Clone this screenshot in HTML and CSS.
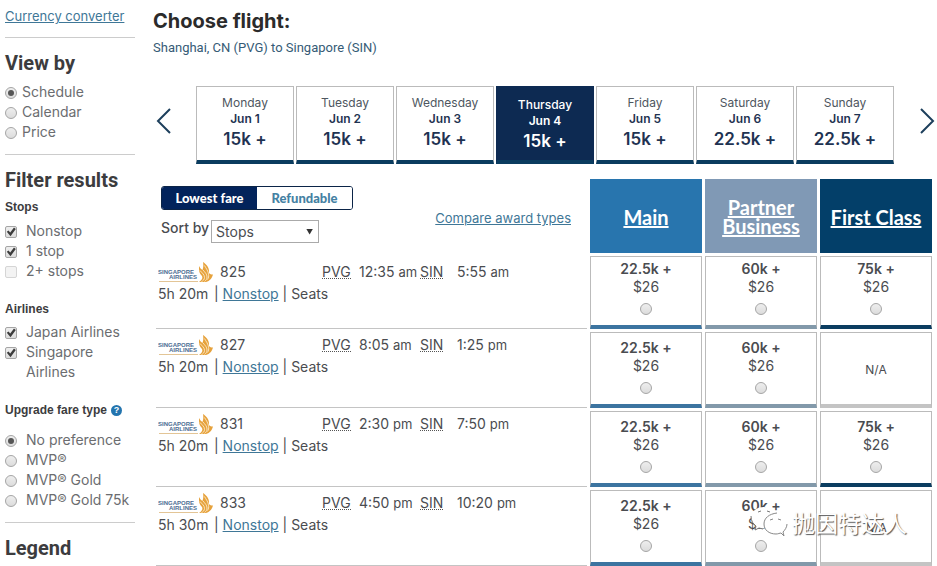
FILE: index.html
```html
<!DOCTYPE html>
<html lang="en">
<head>
<meta charset="utf-8">
<title>Choose flight</title>
<link rel="stylesheet" href="styles.css">
</head>
<body>
<svg class="defs" aria-hidden="true">
  <symbol id="sia" viewBox="0 0 55 21">
    <g class="logo-text" fill="#4c6d92">
      <text x="0" y="12">SINGAPORE</text>
      <text x="39" y="17" text-anchor="end">AIRLINES</text>
    </g>
    <path d="M1 19.500H40" stroke="#e3c596" stroke-width="1"/>
    <path d="M45 0C48 2 51 5 51 9L51 11C52 12 53 12.500 55 12.500C54 16 52 19 48 20L41 20C44 18 45 16 44 14C42 12 41 10 41 7V4C42 6 43 7 44.500 8C45.500 5 45.500 3 45 0Z" fill="#e6a23c"/>
    <path d="M42 8.500C44 11 46.500 12.500 46.500 15.500C46.500 17.500 45 19 43.500 19.500M45 8C47 10.500 49 12 49 15C49 17 48 18.500 46.500 19.500M46.500 3.500C48 6.500 50.500 9 50.500 12.500C51 14 50.500 16 49.500 17.500" stroke="#fff3dc" stroke-width=".8" fill="none"/>
  </symbol>
</svg>
<div class="page">
  <aside class="sidebar">
    <a class="link top-link" href="#">Currency converter</a>
    <section class="group">
      <h2>View by</h2>
      <div class="options tight">
        <label><input type="radio" name="view" checked>Schedule</label>
        <label><input type="radio" name="view">Calendar</label>
        <label><input type="radio" name="view">Price</label>
      </div>
    </section>
    <section class="group">
      <h2>Filter results</h2>
      <h3>Stops</h3>
      <div class="options">
        <label><input type="checkbox" checked>Nonstop</label>
        <label><input type="checkbox" checked>1 stop</label>
        <label class="faded"><input type="checkbox">2+ stops</label>
      </div>
      <h3 class="next">Airlines</h3>
      <div class="options">
        <label><input type="checkbox" checked>Japan Airlines</label>
        <label><input type="checkbox" checked>Singapore Airlines</label>
      </div>
      <h3 class="next">Upgrade fare type <button class="help" type="button" aria-label="Help">?</button></h3>
      <div class="options upgrade">
        <label><input type="radio" name="upgrade" checked>No preference</label>
        <label><input type="radio" name="upgrade">MVP®</label>
        <label><input type="radio" name="upgrade">MVP® Gold</label>
        <label><input type="radio" name="upgrade">MVP® Gold 75k</label>
      </div>
    </section>
    <section class="group">
      <h2>Legend</h2>
    </section>
  </aside>

  <main class="main">
    <h1>Choose flight:</h1>
    <p class="route">Shanghai, CN (PVG) to Singapore (SIN)</p>

    <nav class="dates" aria-label="Dates">
      <button class="arrow" type="button" aria-label="Previous week"><svg width="16" height="28" viewBox="0 0 16 28"><path d="M14 2L2 14L14 26"/></svg></button>
      <div class="days">
        <button type="button" class="day"><span>Monday</span><b>Jun 1</b><strong>15k +</strong></button>
        <button type="button" class="day"><span>Tuesday</span><b>Jun 2</b><strong>15k +</strong></button>
        <button type="button" class="day"><span>Wednesday</span><b>Jun 3</b><strong>15k +</strong></button>
        <button type="button" class="day selected"><span>Thursday</span><b>Jun 4</b><strong>15k +</strong></button>
        <button type="button" class="day"><span>Friday</span><b>Jun 5</b><strong>15k +</strong></button>
        <button type="button" class="day"><span>Saturday</span><b>Jun 6</b><strong>22.5k +</strong></button>
        <button type="button" class="day"><span>Sunday</span><b>Jun 7</b><strong>22.5k +</strong></button>
      </div>
      <button class="arrow" type="button" aria-label="Next week"><svg width="16" height="28" viewBox="0 0 16 28"><path d="M2 2L14 14L2 26"/></svg></button>
    </nav>

    <table class="results">
      <colgroup><col><col class="fare-col"><col class="fare-col"><col class="fare-col"></colgroup>
      <thead>
        <tr>
          <td class="tools">
            <div class="tools-row">
              <div>
                <div class="toggle"><button type="button" class="on">Lowest fare</button><button type="button">Refundable</button></div>
                <div class="sort"><label for="sort">Sort by</label><div class="picker"><select id="sort"><option>Stops</option></select></div></div>
              </div>
              <a class="link compare" href="#">Compare award types</a>
            </div>
          </td>
          <th class="main-fare" scope="col"><a href="#">Main</a></th>
          <th class="business" scope="col"><a href="#">Partner Business</a></th>
          <th class="first" scope="col"><a href="#">First Class</a></th>
        </tr>
      </thead>
      <tbody>
        <tr>
          <td class="flight">
            <div class="legs"><svg class="logo" role="img" aria-label="Singapore Airlines"><use href="#sia"/></svg><span>825</span><abbr title="Shanghai">PVG</abbr><span>12:35 <small>am</small></span><abbr title="Singapore">SIN</abbr><span>5:55 <small>am</small></span></div>
            <div class="details"><span class="duration">5h 20m</span><span>| <a class="link" href="#">Nonstop</a> | Seats</span></div>
          </td>
          <td class="fare main-fare"><label><b>22.5k +</b><span>$26</span><input type="radio" name="fare"></label></td>
          <td class="fare business"><label><b>60k +</b><span>$26</span><input type="radio" name="fare"></label></td>
          <td class="fare first"><label><b>75k +</b><span>$26</span><input type="radio" name="fare"></label></td>
        </tr>
        <tr>
          <td class="flight">
            <div class="legs"><svg class="logo" role="img" aria-label="Singapore Airlines"><use href="#sia"/></svg><span>827</span><abbr title="Shanghai">PVG</abbr><span>8:05 <small>am</small></span><abbr title="Singapore">SIN</abbr><span>1:25 <small>pm</small></span></div>
            <div class="details"><span class="duration">5h 20m</span><span>| <a class="link" href="#">Nonstop</a> | Seats</span></div>
          </td>
          <td class="fare main-fare"><label><b>22.5k +</b><span>$26</span><input type="radio" name="fare"></label></td>
          <td class="fare business"><label><b>60k +</b><span>$26</span><input type="radio" name="fare"></label></td>
          <td class="fare none">N/A</td>
        </tr>
        <tr>
          <td class="flight">
            <div class="legs"><svg class="logo" role="img" aria-label="Singapore Airlines"><use href="#sia"/></svg><span>831</span><abbr title="Shanghai">PVG</abbr><span>2:30 <small>pm</small></span><abbr title="Singapore">SIN</abbr><span>7:50 <small>pm</small></span></div>
            <div class="details"><span class="duration">5h 20m</span><span>| <a class="link" href="#">Nonstop</a> | Seats</span></div>
          </td>
          <td class="fare main-fare"><label><b>22.5k +</b><span>$26</span><input type="radio" name="fare"></label></td>
          <td class="fare business"><label><b>60k +</b><span>$26</span><input type="radio" name="fare"></label></td>
          <td class="fare first"><label><b>75k +</b><span>$26</span><input type="radio" name="fare"></label></td>
        </tr>
        <tr>
          <td class="flight">
            <div class="legs"><svg class="logo" role="img" aria-label="Singapore Airlines"><use href="#sia"/></svg><span>833</span><abbr title="Shanghai">PVG</abbr><span>4:50 <small>pm</small></span><abbr title="Singapore">SIN</abbr><span>10:20 <small>pm</small></span></div>
            <div class="details"><span class="duration">5h 30m</span><span>| <a class="link" href="#">Nonstop</a> | Seats</span></div>
          </td>
          <td class="fare main-fare"><label><b>22.5k +</b><span>$26</span><input type="radio" name="fare"></label></td>
          <td class="fare business"><label><b>60k +</b><span>$26</span><input type="radio" name="fare"></label></td>
          <td class="fare none">N/A</td>
        </tr>
      </tbody>
    </table>
  </main>
</div>
<div class="watermark">
  <svg width="40" height="32" viewBox="0 0 40 32" aria-hidden="true">
    <path d="M15 1C7 1 2 6 2 12C2 15 4 18 7 20L6 24L10 22C12 23 14 23 16 22C25 22 29 17 29 12C28 5 22 1 15 1Z" fill="#fff"/>
    <path d="M2 10C2 15 4 18 7 20L6 24L10 22L14 23M9 6L12 5M18 5L21 6M4 17L6 19" fill="none" stroke="#777" stroke-width="1"/>
    <path d="M26 9C19 9 15 13 15 18C15 24 20 28 27 28C29 28 31 27 32 27L35 30L34 26C37 24 38 21 38 18C37 13 33 9 26 9Z" fill="#fff"/>
    <path d="M28 7C20 8 15 12 15 18C15 24 20 28 27 28C29 28 31 27 32 27L35 30L34 26C36 24 38 21 38 18M21 14L24 13M29 13L32 14" fill="none" stroke="#888" stroke-width="1"/>
  </svg>
  <span lang="zh">抛因特达人</span>
</div>
</body>
</html>
```
FILE: styles.css
```css
* { box-sizing: border-box; }

body {
  margin: 0;
  background: #fff;
  color: #4a4c50;
  font: 14px/20px Inter, "Noto Sans", sans-serif;
}

button, select { font: inherit; cursor: pointer; }
.defs { display: none; }
.link { color: #3f7797; }

.page { display: flex; padding: 6px 2px 0 5px; }

/* Sidebar */
.sidebar { flex: 0 0 130px; margin-right: 18px; color: #6b6d70; }
.top-link { display: block; margin-bottom: 11px; white-space: nowrap; }
.top-link, .compare { font-size: 13px; }
.group { border-top: 1px solid #ccc; padding: 13px 0 12px; }
h2 { margin: 0; font: bold 20px/24px Roboto, sans-serif; color: #3c3c3e; }
h3 {
  display: flex;
  align-items: center;
  gap: 4px;
  margin: 7px 0 6px;
  font: bold 12px/16px "Liberation Sans", sans-serif;
  color: #3c3c3e;
  white-space: nowrap;
}
h3.next { margin: 20px 0 5px; }
.options label { display: grid; grid-template-columns: 12px 1fr; column-gap: 9px; }
.options.tight { margin-top: 7px; }
.options.tight label { column-gap: 5px; }
.options.upgrade { margin-top: 12px; white-space: nowrap; }
.options input { margin: 5px 0 0; }

input[type="radio"], input[type="checkbox"] {
  appearance: none;
  display: grid;
  place-items: center;
  width: 12px;
  height: 12px;
  border: 1px solid #a5a5a5;
  background: linear-gradient(#eee, #dcdcdc);
}
input[type="radio"] { border-radius: 50%; }
input[type="checkbox"] { border-radius: 2px; }
.faded input { border-color: #d5d5d5; background: #f3f3f3; }
input[type="radio"]:checked::before {
  content: "";
  width: 6px;
  height: 6px;
  border-radius: 50%;
  background: #555;
}
input[type="checkbox"]:checked::before {
  content: "";
  width: 10px;
  height: 10px;
  background: #3c3c3c;
  clip-path: polygon(8% 48%, 25% 34%, 42% 56%, 80% 5%, 98% 20%, 45% 92%);
}
.help {
  width: 11px;
  height: 11px;
  padding: 0;
  border: 0;
  border-radius: 50%;
  background: #2374ae;
  color: #fff;
  font: bold 9px/11px "Liberation Sans", sans-serif;
}

/* Heading and dates */
.main { flex: 1; min-width: 0; }
h1 { margin: 3px 0 7px; font: bold 20px/24px Inter, sans-serif; color: #2b2b2b; }
.route { margin: 0; font: 13px/16px Roboto, sans-serif; color: #355b76; }
.dates { display: flex; align-items: center; margin: 30px 0 12px; padding-left: 3px; }
.arrow { flex: none; display: flex; align-items: center; padding: 0; border: 0; background: none; height: 78px; padding-bottom: 8px; }
.arrow path { fill: none; stroke: #1d3f5c; stroke-width: 2; }
.days { flex: 1; display: flex; gap: 2px; margin: 0 25px 0 24px; }
.day {
  flex: 1 1 0;
  min-width: 0;
  height: 78px;
  padding: 0 0 2px;
  border: 1px solid #bbb;
  border-bottom: 4px solid #0a3c5f;
  background: #fff;
  color: #1f3352;
  text-align: center;
}
.day span, .day b, .day strong { display: block; line-height: 16px; font-size: 12px; }
.day span { color: #4e5660; }
.day b { font-weight: 600; }
.day strong { font-size: 17px; line-height: 24px; font-weight: 600; }
.day.selected { background: #0d2a52; border-color: #0d2a52; border-bottom-color: #0a3c5f; color: #fff; padding: 2px 0 0; }
.day.selected span { color: #fff; font-weight: 500; }

/* Results */
.results { width: 100%; table-layout: fixed; border-collapse: separate; border-spacing: 3px; }
.fare-col { width: 112px; }
.results td, .results th { padding: 0; }
.results th { height: 74px; padding: 2px 4px 0; font: bold 20px/19px Lato, sans-serif; }
.results th a { color: #fff; }
th.main-fare { background: #2875ae; }
th.business { background: #8099b5; }
th.first { background: #033f69; }

.results .tools { vertical-align: top; padding: 7px 16px 0 5px; }
.tools-row { display: flex; justify-content: space-between; align-items: flex-start; }
.compare { margin-top: 22px; }
.toggle { display: flex; width: 192px; border: 1px solid #0b2447; border-radius: 3px; overflow: hidden; }
.toggle button {
  flex: 1 1 0;
  height: 22px;
  padding: 0;
  border: 0;
  background: #fff;
  color: #4481a3;
  font: 900 13px/22px Lato, sans-serif;
}
.toggle .on { background: #02235b; color: #fff; }
.sort { display: flex; align-items: flex-start; gap: 2px; margin-top: 8px; font-weight: 500; }
.picker { display: grid; align-items: center; margin-top: 2px; font-weight: 400; }
.picker::after {
  content: "";
  grid-area: 1 / 1;
  justify-self: end;
  width: 7px;
  height: 6px;
  margin-right: 6px;
  background: #333;
  clip-path: polygon(0 0, 100% 0, 50% 100%);
  pointer-events: none;
}
.picker select {
  grid-area: 1 / 1;
  appearance: none;
  width: 108px;
  height: 23px;
  padding: 0 4px;
  border: 1px solid #aaa;
  border-radius: 0;
  background: #fff;
  color: #4a4c50;
  line-height: 20px;
}

.results .flight { vertical-align: top; padding: 2px 0 0 2px; border-bottom: 1px solid #c4c4c4; }
.results tbody tr:first-child .flight { padding-top: 5px; }
.legs { display: grid; grid-template-columns: 62px 102px 37px 61px 37px 1fr; line-height: 22px; white-space: nowrap; }
.legs > svg { width: 55px; height: 21px; margin-top: 1px; }
.logo-text { font: bold 6px "Liberation Sans", sans-serif; }
.legs abbr { text-decoration: none; justify-self: start; height: 18px; border-bottom: 1px dotted #555; }
.legs small { font-size: 13px; }
.details { display: flex; line-height: 22px; }
.duration { width: 56px; }

.results .fare {
  height: 76px;
  border: 1px solid #bbb;
  border-bottom: 4px solid #c4c4c4;
  text-align: center;
  vertical-align: top;
  padding-top: 6px;
}
.results tbody tr:first-child .fare { height: 73px; padding-top: 3px; }
.fare label, .fare b, .fare span { display: block; line-height: 18px; }
.fare b { font-weight: 600; }
.fare input { margin: 7px auto 0; }
.results .fare.main-fare { border-bottom-color: #3c74a0; }
.results .fare.business { border-bottom-color: #8299aa; }
.results .fare.first { border-bottom-color: #0b3d60; }
.results .fare.none { vertical-align: middle; padding: 2px 0 0; font-size: 12px; }

.watermark {
  position: absolute;
  top: 506px;
  right: 30px;
  display: flex;
  align-items: center;
  gap: 3px;
  color: #fff;
  font: 23px/32px "Noto Sans CJK SC", sans-serif;
  text-shadow: 1px 1px 1px #555;
}
```
